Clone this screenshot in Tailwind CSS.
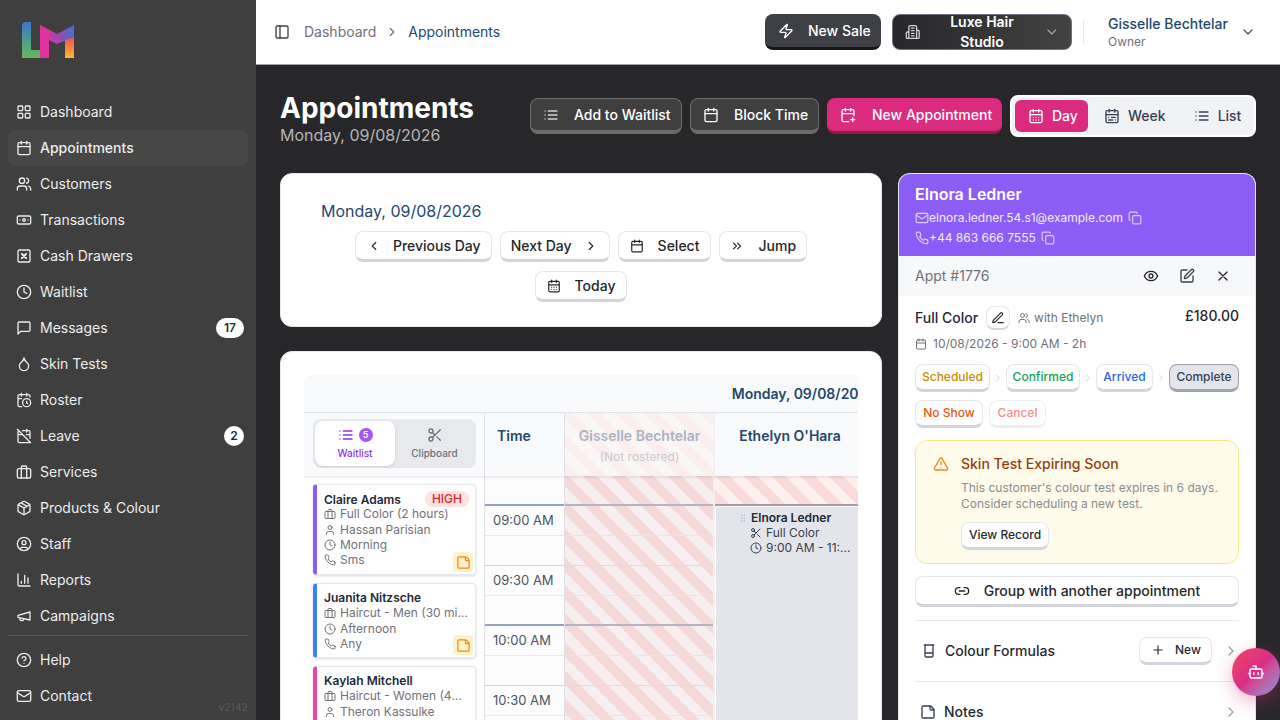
<!DOCTYPE html>
<html lang="en">
<head>
    <meta charset="UTF-8">
    <title>Appointments</title>
    <script src="https://cdn.jsdelivr.net/npm/@tailwindcss/browser@4"></script>
</head>
<body class="[font-family:Inter,sans-serif] bg-[#27272a] h-[720px] overflow-hidden">

<!-- icon sprite -->
<svg class="hidden">
    <symbol id="i-grid" viewBox="0 0 24 24"><rect x="3" y="3" width="7" height="7" rx="1"/><rect x="14" y="3" width="7" height="7" rx="1"/><rect x="14" y="14" width="7" height="7" rx="1"/><rect x="3" y="14" width="7" height="7" rx="1"/></symbol>
    <symbol id="i-cal" viewBox="0 0 24 24"><path d="M8 2v4M16 2v4M3 10h18"/><rect x="3" y="4" width="18" height="18" rx="2"/></symbol>
    <symbol id="i-users" viewBox="0 0 24 24"><path d="M16 21v-2a4 4 0 0 0-4-4H6a4 4 0 0 0-4 4v2"/><circle cx="9" cy="7" r="4"/><path d="M22 21v-2a4 4 0 0 0-3-3.87M16 3.13a4 4 0 0 1 0 7.75"/></symbol>
    <symbol id="i-bank" viewBox="0 0 24 24"><rect x="2" y="6" width="20" height="12" rx="2"/><circle cx="12" cy="12" r="2"/><path d="M6 12h.01M18 12h.01"/></symbol>
    <symbol id="i-drawer" viewBox="0 0 24 24"><rect x="3" y="3" width="18" height="18" rx="2"/><path stroke-width="3" d="m15 9-6 6M9 9l6 6"/></symbol>
    <symbol id="i-clock" viewBox="0 0 24 24"><circle cx="12" cy="12" r="10"/><path d="M12 6v6l4 2"/></symbol>
    <symbol id="i-msg" viewBox="0 0 24 24"><path d="M21 15a2 2 0 0 1-2 2H7l-4 4V5a2 2 0 0 1 2-2h14a2 2 0 0 1 2 2z"/></symbol>
    <symbol id="i-drop" viewBox="0 0 24 24"><path d="M12 22a7 7 0 0 0 7-7c0-2-1-3.9-3-5.5s-3.5-4-4-6.5c-.5 2.5-2 4.9-4 6.5C6 11.1 5 13 5 15a7 7 0 0 0 7 7z"/></symbol>
    <symbol id="i-calclock" viewBox="0 0 24 24"><path d="M21 7.5V6a2 2 0 0 0-2-2H5a2 2 0 0 0-2 2v14a2 2 0 0 0 2 2h3.5M16 2v4M8 2v4M3 10h5M17.5 17.5 16 16.3V14"/><circle cx="16" cy="16" r="6"/></symbol>
    <symbol id="i-caloff" viewBox="0 0 24 24"><path d="M4.2 4.2A2 2 0 0 0 3 6v14a2 2 0 0 0 2 2h14a2 2 0 0 0 1.82-1.18M21 15.5V6a2 2 0 0 0-2-2H9.5M16 2v4M3 10h7M21 10h-5.5M2 2l20 20"/></symbol>
    <symbol id="i-case" viewBox="0 0 24 24"><rect x="2" y="7" width="20" height="14" rx="2"/><path d="M16 21V5a2 2 0 0 0-2-2h-4a2 2 0 0 0-2 2v16"/></symbol>
    <symbol id="i-box" viewBox="0 0 24 24"><path d="m7.5 4.27 9 5.15M21 8a2 2 0 0 0-1-1.73l-7-4a2 2 0 0 0-2 0l-7 4A2 2 0 0 0 3 8v8a2 2 0 0 0 1 1.73l7 4a2 2 0 0 0 2 0l7-4A2 2 0 0 0 21 16ZM3.3 7l8.7 5 8.7-5M12 22V12"/></symbol>
    <symbol id="i-ucircle" viewBox="0 0 24 24"><circle cx="12" cy="12" r="10"/><circle cx="12" cy="10" r="3"/><path d="M7 20.662V19a2 2 0 0 1 2-2h6a2 2 0 0 1 2 2v1.662"/></symbol>
    <symbol id="i-chart" viewBox="0 0 24 24"><path d="M3 3v16a2 2 0 0 0 2 2h16M18 17V9M13 17V5M8 17v-3"/></symbol>
    <symbol id="i-mega" viewBox="0 0 24 24"><path d="m3 11 18-5v12L3 14v-3zM11.6 16.8a3 3 0 1 1-5.8-1.6"/></symbol>
    <symbol id="i-help" viewBox="0 0 24 24"><circle cx="12" cy="12" r="10"/><path d="M9.09 9a3 3 0 0 1 5.83 1c0 2-3 3-3 3M12 17h.01"/></symbol>
    <symbol id="i-mail" viewBox="0 0 24 24"><rect x="2" y="4" width="20" height="16" rx="2"/><path d="m22 7-8.97 5.7a1.94 1.94 0 0 1-2.06 0L2 7"/></symbol>
    <symbol id="i-panel" viewBox="0 0 24 24"><rect x="3" y="3" width="18" height="18" rx="2"/><path d="M9 3v18"/></symbol>
    <symbol id="i-right" viewBox="0 0 24 24"><path d="m9 18 6-6-6-6"/></symbol>
    <symbol id="i-left" viewBox="0 0 24 24"><path d="m15 18-6-6 6-6"/></symbol>
    <symbol id="i-down" viewBox="0 0 24 24"><path d="m6 9 6 6 6-6"/></symbol>
    <symbol id="i-rights" viewBox="0 0 24 24"><path d="m6 17 5-5-5-5M13 17l5-5-5-5"/></symbol>
    <symbol id="i-zap" viewBox="0 0 24 24"><path d="M4 14a1 1 0 0 1-.78-1.63l9.9-10.2a.5.5 0 0 1 .86.46l-1.92 6.02A1 1 0 0 0 13 10h7a1 1 0 0 1 .78 1.63l-9.9 10.2a.5.5 0 0 1-.86-.46l1.92-6.02A1 1 0 0 0 11 14z"/></symbol>
    <symbol id="i-build" viewBox="0 0 24 24"><path d="M6 22V4a2 2 0 0 1 2-2h8a2 2 0 0 1 2 2v18ZM6 12H4a2 2 0 0 0-2 2v6a2 2 0 0 0 2 2h2M18 9h2a2 2 0 0 1 2 2v9a2 2 0 0 1-2 2h-2M10 6h4M10 10h4M10 14h4M10 18h4"/></symbol>
    <symbol id="i-list" viewBox="0 0 24 24"><path d="M3 12h.01M3 18h.01M3 6h.01M8 12h13M8 18h13M8 6h13"/></symbol>
    <symbol id="i-calplus" viewBox="0 0 24 24"><path d="M8 2v4M16 2v4M21 13V6a2 2 0 0 0-2-2H5a2 2 0 0 0-2 2v14a2 2 0 0 0 2 2h8M3 10h18M16 19h6M19 16v6"/></symbol>
    <symbol id="i-caldays" viewBox="0 0 24 24"><path d="M8 2v4M16 2v4M3 10h18M8 14h.01M12 14h.01M16 14h.01M8 18h.01M12 18h.01M16 18h.01"/><rect x="3" y="4" width="18" height="18" rx="2"/></symbol>
    <symbol id="i-calrange" viewBox="0 0 24 24"><rect x="3" y="4" width="18" height="18" rx="2"/><path d="M16 2v4M3 10h18M8 2v4M17 14h-6M13 18H7M7 14h.01M17 18h.01"/></symbol>
    <symbol id="i-scissors" viewBox="0 0 24 24"><circle cx="6" cy="6" r="3"/><path d="M8.12 8.12 12 12M20 4 8.12 15.88"/><circle cx="6" cy="18" r="3"/><path d="M14.8 14.8 20 20"/></symbol>
    <symbol id="i-user" viewBox="0 0 24 24"><path d="M19 21v-2a4 4 0 0 0-4-4H9a4 4 0 0 0-4 4v2"/><circle cx="12" cy="7" r="4"/></symbol>
    <symbol id="i-phone" viewBox="0 0 24 24"><path d="M22 16.92v3a2 2 0 0 1-2.18 2 19.79 19.79 0 0 1-8.63-3.07 19.5 19.5 0 0 1-6-6 19.79 19.79 0 0 1-3.07-8.67A2 2 0 0 1 4.11 2h3a2 2 0 0 1 2 1.72 12.84 12.84 0 0 0 .7 2.81 2 2 0 0 1-.45 2.11L8.09 9.91a16 16 0 0 0 6 6l1.27-1.27a2 2 0 0 1 2.11-.45 12.84 12.84 0 0 0 2.81.7A2 2 0 0 1 22 16.92z"/></symbol>
    <symbol id="i-note" viewBox="0 0 24 24"><path d="M16 3H5a2 2 0 0 0-2 2v14a2 2 0 0 0 2 2h14a2 2 0 0 0 2-2V8ZM15 3v4a2 2 0 0 0 2 2h4"/></symbol>
    <symbol id="i-grip" viewBox="0 0 24 24"><path stroke-width="3" d="M9 5h.01M9 12h.01M9 19h.01M15 5h.01M15 12h.01M15 19h.01"/></symbol>
    <symbol id="i-copy" viewBox="0 0 24 24"><rect x="8" y="8" width="14" height="14" rx="2"/><path d="M4 16c-1.1 0-2-.9-2-2V4c0-1.1.9-2 2-2h10c1.1 0 2 .9 2 2"/></symbol>
    <symbol id="i-eye" viewBox="0 0 24 24"><path d="M2 12s3-7 10-7 10 7 10 7-3 7-10 7-10-7-10-7Z"/><circle cx="12" cy="12" r="3"/></symbol>
    <symbol id="i-edit" viewBox="0 0 24 24"><path d="M12 3H5a2 2 0 0 0-2 2v14a2 2 0 0 0 2 2h14a2 2 0 0 0 2-2v-7M18.375 2.625a1 1 0 0 1 3 3l-9.013 9.014a2 2 0 0 1-.853.505l-2.873.84a.5.5 0 0 1-.62-.62l.84-2.873a2 2 0 0 1 .506-.852z"/></symbol>
    <symbol id="i-x" viewBox="0 0 24 24"><path d="M18 6 6 18M6 6l12 12"/></symbol>
    <symbol id="i-pen" viewBox="0 0 24 24"><path d="M12 20h9M16.376 3.622a1 1 0 0 1 3.002 3.002L7.368 18.635a2 2 0 0 1-.855.506l-2.872.838a.5.5 0 0 1-.62-.62l.838-2.872a2 2 0 0 1 .506-.854z"/></symbol>
    <symbol id="i-warn" viewBox="0 0 24 24"><path d="m21.73 18-8-14a2 2 0 0 0-3.48 0l-8 14A2 2 0 0 0 4 21h16a2 2 0 0 0 1.73-3ZM12 9v4M12 17h.01"/></symbol>
    <symbol id="i-link" viewBox="0 0 24 24"><path d="M9 17H7A5 5 0 0 1 7 7h2M15 7h2a5 5 0 1 1 0 10h-2M8 12h8"/></symbol>
    <symbol id="i-glass" viewBox="0 0 24 24"><path d="M5 3h14M6 3v16a2 2 0 0 0 2 2h8a2 2 0 0 0 2-2V3M6 15h12"/></symbol>
    <symbol id="i-plus" viewBox="0 0 24 24"><path d="M5 12h14M12 5v14"/></symbol>
    <symbol id="i-bot" viewBox="0 0 24 24"><path d="M12 8V4H8"/><rect x="4" y="8" width="16" height="12" rx="2"/><path d="M2 14h2M20 14h2M15 13v2M9 13v2"/></symbol>
</svg>

<div class="flex h-[720px]">

    <!-- sidebar -->
    <aside class="w-[256px] shrink-0 bg-[#3f3f3f] relative text-[#ececec] text-sm">
        <div class="h-[94px] pl-[22px] pt-[22px]">
            <svg width="54" height="37" viewBox="22 22 54 37">
                <defs>
                    <linearGradient id="lg1" x1="0" y1="0" x2="0" y2="1"><stop offset="0" stop-color="#3b78cc"/><stop offset="1" stop-color="#64bb55"/></linearGradient>
                    <linearGradient id="lg2" x1="0" y1="0" x2="1" y2="0"><stop offset="0" stop-color="#e0339c"/><stop offset=".55" stop-color="#a446ad"/><stop offset="1" stop-color="#3b74cf"/></linearGradient>
                    <linearGradient id="lg3" x1="0" y1="0" x2="0" y2="1"><stop offset="0" stop-color="#ee4c62"/><stop offset="1" stop-color="#fdb92c"/></linearGradient>
                </defs>
                <path fill="url(#lg1)" d="M22 58V26a4 4 0 0 1 4-4h5v28h9v8z"/>
                <path fill="url(#lg2)" d="M40 25l17 9 17-9v12l-17 7-8-4v18h-9z"/>
                <path fill="#e0339c" d="M40 25l9 5v28h-9z"/>
                <path fill="url(#lg3)" d="M65 40l9-3v21h-9z"/>
            </svg>
        </div>
        <nav class="px-2 flex flex-col">
            <a class="h-9 flex items-center gap-2 px-2"><svg class="w-4 h-4 fill-none stroke-current stroke-2 [stroke-linecap:round] [stroke-linejoin:round]"><use href="#i-grid"/></svg>Dashboard</a>
            <a class="h-9 flex items-center gap-2 px-2 bg-[#474747] rounded-lg font-medium"><svg class="w-4 h-4 fill-none stroke-current stroke-2 [stroke-linecap:round] [stroke-linejoin:round]"><use href="#i-cal"/></svg>Appointments</a>
            <a class="h-9 flex items-center gap-2 px-2"><svg class="w-4 h-4 fill-none stroke-current stroke-2 [stroke-linecap:round] [stroke-linejoin:round]"><use href="#i-users"/></svg>Customers</a>
            <a class="h-9 flex items-center gap-2 px-2"><svg class="w-4 h-4 fill-none stroke-current stroke-2 [stroke-linecap:round] [stroke-linejoin:round]"><use href="#i-bank"/></svg>Transactions</a>
            <a class="h-9 flex items-center gap-2 px-2"><svg class="w-4 h-4 fill-none stroke-current stroke-2 [stroke-linecap:round] [stroke-linejoin:round]"><use href="#i-drawer"/></svg>Cash Drawers</a>
            <a class="h-9 flex items-center gap-2 px-2"><svg class="w-4 h-4 fill-none stroke-current stroke-2 [stroke-linecap:round] [stroke-linejoin:round]"><use href="#i-clock"/></svg>Waitlist</a>
            <a class="h-9 flex items-center gap-2 px-2"><svg class="w-4 h-4 fill-none stroke-current stroke-2 [stroke-linecap:round] [stroke-linejoin:round]"><use href="#i-msg"/></svg>Messages<span class="ml-auto mr-[-4px] h-5 w-7 rounded-full bg-white text-[#1f2937] text-xs font-semibold flex items-center justify-center">17</span></a>
            <a class="h-9 flex items-center gap-2 px-2"><svg class="w-4 h-4 fill-none stroke-current stroke-2 [stroke-linecap:round] [stroke-linejoin:round]"><use href="#i-drop"/></svg>Skin Tests</a>
            <a class="h-9 flex items-center gap-2 px-2"><svg class="w-4 h-4 fill-none stroke-current stroke-2 [stroke-linecap:round] [stroke-linejoin:round]"><use href="#i-calclock"/></svg>Roster</a>
            <a class="h-9 flex items-center gap-2 px-2"><svg class="w-4 h-4 fill-none stroke-current stroke-2 [stroke-linecap:round] [stroke-linejoin:round]"><use href="#i-caloff"/></svg>Leave<span class="ml-auto mr-[-4px] h-5 w-5 rounded-full bg-white text-[#1f2937] text-xs font-semibold flex items-center justify-center">2</span></a>
            <a class="h-9 flex items-center gap-2 px-2"><svg class="w-4 h-4 fill-none stroke-current stroke-2 [stroke-linecap:round] [stroke-linejoin:round]"><use href="#i-case"/></svg>Services</a>
            <a class="h-9 flex items-center gap-2 px-2"><svg class="w-4 h-4 fill-none stroke-current stroke-2 [stroke-linecap:round] [stroke-linejoin:round]"><use href="#i-box"/></svg>Products &amp; Colour</a>
            <a class="h-9 flex items-center gap-2 px-2"><svg class="w-4 h-4 fill-none stroke-current stroke-2 [stroke-linecap:round] [stroke-linejoin:round]"><use href="#i-ucircle"/></svg>Staff</a>
            <a class="h-9 flex items-center gap-2 px-2"><svg class="w-4 h-4 fill-none stroke-current stroke-2 [stroke-linecap:round] [stroke-linejoin:round]"><use href="#i-chart"/></svg>Reports</a>
            <a class="h-9 flex items-center gap-2 px-2"><svg class="w-4 h-4 fill-none stroke-current stroke-2 [stroke-linecap:round] [stroke-linejoin:round]"><use href="#i-mega"/></svg>Campaigns</a>
            <div class="border-t border-[#5a5a5a] mt-[1px] mb-[6px]"></div>
            <a class="h-9 flex items-center gap-2 px-2"><svg class="w-4 h-4 fill-none stroke-current stroke-2 [stroke-linecap:round] [stroke-linejoin:round]"><use href="#i-help"/></svg>Help</a>
            <a class="h-9 flex items-center gap-2 px-2"><svg class="w-4 h-4 fill-none stroke-current stroke-2 [stroke-linecap:round] [stroke-linejoin:round]"><use href="#i-mail"/></svg>Contact</a>
        </nav>
        <span class="absolute right-2 bottom-[6px] text-[10px] tracking-wide text-[#5c5c5c]">v2142</span>
    </aside>

    <div class="flex-1 min-w-0 flex flex-col">

        <!-- top bar -->
        <header class="h-[65px] shrink-0 bg-white border-b border-[#a3a3a3] flex items-center pl-[18px] pr-6 text-sm">
            <svg class="w-4 h-4 fill-none stroke-[#3f3f46] stroke-2 [stroke-linecap:round] [stroke-linejoin:round]"><use href="#i-panel"/></svg>
            <span class="ml-[14px] text-[#71717a]">Dashboard</span>
            <svg class="w-[14px] h-[14px] mx-[9px] fill-none stroke-[#71717a] stroke-2 [stroke-linecap:round] [stroke-linejoin:round]"><use href="#i-right"/></svg>
            <span class="text-[#24486e]">Appointments</span>
            <button class="ml-auto h-9 w-[116px] rounded-lg bg-[#3f3f46] border-b-[3px] border-[#18181b] text-white font-medium flex items-center pl-[13px] gap-[14px]"><svg class="w-4 h-4 fill-none stroke-current stroke-2 [stroke-linecap:round] [stroke-linejoin:round]"><use href="#i-zap"/></svg>New Sale</button>
            <button class="ml-[11px] h-9 w-[180px] rounded-lg bg-gradient-to-r from-[#27272a] to-[#434343] border border-[#6b7280] text-white font-semibold flex items-center pl-[12px] gap-2"><svg class="w-4 h-4 fill-none stroke-[#d4d4d8] stroke-2 [stroke-linecap:round] [stroke-linejoin:round]"><use href="#i-build"/></svg>Luxe Hair Studio<svg class="w-4 h-4 ml-auto mr-[12px] fill-none stroke-[#a1a1aa] stroke-2 [stroke-linecap:round] [stroke-linejoin:round]"><use href="#i-down"/></svg></button>
            <div class="w-px h-6 bg-[#e5e7eb] ml-[11px]"></div>
            <div class="ml-[24px] flex flex-col">
                <span class="text-[#24486e] font-medium leading-5">Gisselle Bechtelar</span>
                <span class="text-xs text-[#71717a] leading-4">Owner</span>
            </div>
            <svg class="w-4 h-4 ml-[12px] fill-none stroke-[#52525b] stroke-2 [stroke-linecap:round] [stroke-linejoin:round]"><use href="#i-down"/></svg>
        </header>

        <main class="flex-1 min-h-0 overflow-hidden px-6 relative">

            <!-- title row -->
            <div class="h-[108px] flex items-start">
                <div class="pt-[25px] text-white">
                    <h1 class="text-[28px] leading-9 font-bold">Appointments</h1>
                    <p class="text-base leading-5 text-[#b4b4b8] mt-[-1px]">Monday, 09/08/2026</p>
                </div>
                <div class="ml-auto flex items-start gap-2 pt-[33px] text-sm">
                    <button class="h-9 w-[152px] rounded-lg bg-[#3f3f3f] border border-[#6b6b6b] border-b-[4px] text-white font-medium flex items-center pl-3 gap-[15px]"><svg class="w-4 h-4 fill-none stroke-[#d4d4d8] stroke-2 [stroke-linecap:round] [stroke-linejoin:round]"><use href="#i-list"/></svg>Add to Waitlist</button>
                    <button class="h-9 w-[129px] rounded-lg bg-[#3f3f3f] border border-[#6b6b6b] border-b-[4px] text-white font-medium flex items-center pl-3 gap-[15px]"><svg class="w-4 h-4 fill-none stroke-current stroke-2 [stroke-linecap:round] [stroke-linejoin:round]"><use href="#i-cal"/></svg>Block Time</button>
                    <button class="h-9 w-[175px] rounded-lg bg-[#db2b7f] border-b-[3px] border-[#9d174d] text-white font-medium flex items-center pl-[13px] gap-4"><svg class="w-4 h-4 fill-none stroke-current stroke-2 [stroke-linecap:round] [stroke-linejoin:round]"><use href="#i-calplus"/></svg>New Appointment</button>
                    <div class="mt-[-3px] h-[42px] w-[246px] rounded-lg bg-[#f1f2f5] border-2 border-white flex items-center p-[3px] text-[#374151] font-medium">
                        <span class="h-8 w-[73px] rounded-md bg-[#db2b7f] text-white flex items-center pl-[13px] gap-2"><svg class="w-4 h-4 fill-none stroke-current stroke-2 [stroke-linecap:round] [stroke-linejoin:round]"><use href="#i-caldays"/></svg>Day</span>
                        <span class="ml-4 flex items-center gap-2"><svg class="w-4 h-4 fill-none stroke-current stroke-2 [stroke-linecap:round] [stroke-linejoin:round]"><use href="#i-calrange"/></svg>Week</span>
                        <span class="ml-7 flex items-center gap-2"><svg class="w-4 h-4 fill-none stroke-current stroke-2 [stroke-linecap:round] [stroke-linejoin:round]"><use href="#i-list"/></svg>List</span>
                    </div>
                </div>
            </div>

            <div class="flex items-start gap-4">

                <!-- left column -->
                <div class="w-[602px] shrink-0 flex flex-col gap-6">
                    <section class="h-[154px] bg-white rounded-xl border border-[#e5e7eb] px-[40px] pt-[27px] text-sm text-[#27272a]">
                        <p class="text-base leading-5 text-[#24486e]">Monday, 09/08/2026</p>
                        <div class="mt-[10px] flex flex-wrap justify-center gap-x-2 gap-y-[9px] font-medium">
                            <button class="h-[31px] rounded-lg bg-white border border-[#e5e7eb] border-b-[3px] border-b-[#d4d4dc] flex items-center pl-[11px] pr-[10px] gap-3"><svg class="w-[14px] h-[14px] fill-none stroke-current stroke-2 [stroke-linecap:round] [stroke-linejoin:round]"><use href="#i-left"/></svg>Previous Day</button>
                            <button class="h-[31px] rounded-lg bg-white border border-[#e5e7eb] border-b-[3px] border-b-[#d4d4dc] flex items-center pl-[10px] pr-[11px] gap-3">Next Day<svg class="w-[14px] h-[14px] fill-none stroke-current stroke-2 [stroke-linecap:round] [stroke-linejoin:round]"><use href="#i-right"/></svg></button>
                            <button class="h-[31px] rounded-lg bg-white border border-[#e5e7eb] border-b-[3px] border-b-[#d4d4dc] flex items-center px-[11px] gap-[14px]"><svg class="w-[14px] h-[14px] fill-none stroke-current stroke-2 [stroke-linecap:round] [stroke-linejoin:round]"><use href="#i-cal"/></svg>Select</button>
                            <button class="h-[31px] rounded-lg bg-white border border-[#e5e7eb] border-b-[3px] border-b-[#d4d4dc] flex items-center px-[10px] gap-[14px]"><svg class="w-[14px] h-[14px] fill-none stroke-current stroke-2 [stroke-linecap:round] [stroke-linejoin:round]"><use href="#i-rights"/></svg>Jump</button>
                            <button class="h-[31px] rounded-lg bg-white border border-[#e5e7eb] border-b-[3px] border-b-[#d4d4dc] flex items-center px-[11px] gap-[14px]"><svg class="w-[14px] h-[14px] fill-none stroke-current stroke-2 [stroke-linecap:round] [stroke-linejoin:round]"><use href="#i-caldays"/></svg>Today</button>
                        </div>
                    </section>

                    <!-- calendar -->
                    <section class="h-[400px] bg-white rounded-xl border border-[#e5e7eb] p-[23px] pb-0">
                        <div class="w-[554px] h-[400px] overflow-hidden">
                            <div class="w-[1000px]">
                                <div class="h-[38px] bg-[#f9fafb] border-b border-[#e5e7eb] rounded-t-lg flex items-center justify-center text-sm font-semibold text-[#24486e]">Monday, 09/08/2026</div>
                                <div class="flex h-[63px] bg-[#f9fafb] shadow-[0_1px_3px_rgba(0,0,0,0.12)] relative z-10">
                                    <div class="w-[181px] border-r border-[#e0e2e7] pl-[9px] pt-[6px]">
                                        <div class="w-[163px] h-[49px] rounded-lg bg-[#e8e9ed] p-[2px] flex">
                                            <div class="w-[80px] h-[45px] rounded-lg bg-white shadow-sm flex flex-col items-center pt-[6px] text-[#9333ea]">
                                                <div class="flex items-center gap-[5px] h-4"><svg class="w-4 h-4 fill-none stroke-[#9333ea] stroke-2 [stroke-linecap:round] [stroke-linejoin:round]"><use href="#i-list"/></svg><span class="w-[14px] h-[14px] rounded-full bg-[#a855f7] text-white text-[9px] font-semibold flex items-center justify-center">5</span></div>
                                                <span class="text-[10px] font-medium leading-4 mt-[2px]">Waitlist</span>
                                            </div>
                                            <div class="flex-1 flex flex-col items-center pt-[6px] text-[#6b7280]">
                                                <svg class="w-4 h-4 fill-none stroke-current stroke-2 [stroke-linecap:round] [stroke-linejoin:round]"><use href="#i-scissors"/></svg>
                                                <span class="text-[10px] font-medium leading-4 mt-[2px]">Clipboard</span>
                                            </div>
                                        </div>
                                    </div>
                                    <div class="w-[80px] border-r border-[#e0e2e7] pl-3 pt-[13px] text-sm font-semibold text-[#24486e]">Time</div>
                                    <div class="w-[150px] border-r border-[#eeeff2] pt-[13px] text-center bg-[repeating-linear-gradient(45deg,#fbeeee,#fbeeee_10px,#fbf6f6_10px,#fbf6f6_20px)]">
                                        <div class="text-sm font-semibold text-[#a9b4c2]">Gisselle Bechtelar</div>
                                        <div class="text-xs text-[#c9c9cf] mt-[3px]">(Not rostered)</div>
                                    </div>
                                    <div class="w-[150px] pt-[13px] text-center text-sm font-semibold text-[#24486e]">Ethelyn O'Hara</div>
                                </div>
                                <div class="flex">
                                    <!-- waitlist -->
                                    <div class="w-[181px] border-r border-[#e0e2e7] pl-[9px] pr-2 pt-2 flex flex-col gap-2 text-xs text-[#71717a]">
                                        <div class="h-[91px] rounded bg-white border border-[#e5e7eb] border-l-[4px] border-l-[#8b5cf6] shadow-[0_1px_3px_rgba(0,0,0,0.15)] pl-[7px] pr-[6px] pt-[6px] leading-[15px] relative">
                                            <div class="flex items-center justify-between text-[#1f2937] font-semibold"><span>Claire Adams</span><span class="rounded-full bg-[#fee2e2] text-[#dc2626] font-medium px-[7px] leading-4">HIGH</span></div>
                                            <div class="flex items-center gap-1 mt-[-1px]"><svg class="w-3 h-3 fill-none stroke-current stroke-2 [stroke-linecap:round] [stroke-linejoin:round]"><use href="#i-case"/></svg>Full Color (2 hours)</div>
                                            <div class="flex items-center gap-1 mt-[1px]"><svg class="w-3 h-3 fill-none stroke-current stroke-2 [stroke-linecap:round] [stroke-linejoin:round]"><use href="#i-user"/></svg>Hassan Parisian</div>
                                            <div class="flex items-center gap-1"><svg class="w-3 h-3 fill-none stroke-current stroke-2 [stroke-linecap:round] [stroke-linejoin:round]"><use href="#i-clock"/></svg>Morning</div>
                                            <div class="flex items-center gap-1"><svg class="w-3 h-3 fill-none stroke-current stroke-2 [stroke-linecap:round] [stroke-linejoin:round]"><use href="#i-phone"/></svg>Sms</div>
                                            <span class="absolute right-[2px] bottom-[2px] w-5 h-5 rounded bg-[#fef3c7] flex items-center justify-center"><svg class="w-[15px] h-[15px] fill-none stroke-[#e58a24] stroke-2 [stroke-linecap:round] [stroke-linejoin:round]"><use href="#i-note"/></svg></span>
                                        </div>
                                        <div class="h-[75px] rounded bg-white border border-[#e5e7eb] border-l-[4px] border-l-[#3b82f6] shadow-[0_1px_3px_rgba(0,0,0,0.15)] pl-[7px] pr-[6px] pt-[6px] leading-[15px] relative">
                                            <div class="text-[#1f2937] font-semibold">Juanita Nitzsche</div>
                                            <div class="flex items-center gap-1"><svg class="w-3 h-3 shrink-0 fill-none stroke-current stroke-2 [stroke-linecap:round] [stroke-linejoin:round]"><use href="#i-case"/></svg><span class="truncate">Haircut - Men (30 minutes)</span></div>
                                            <div class="flex items-center gap-1 mt-[1px]"><svg class="w-3 h-3 fill-none stroke-current stroke-2 [stroke-linecap:round] [stroke-linejoin:round]"><use href="#i-clock"/></svg>Afternoon</div>
                                            <div class="flex items-center gap-1"><svg class="w-3 h-3 fill-none stroke-current stroke-2 [stroke-linecap:round] [stroke-linejoin:round]"><use href="#i-phone"/></svg>Any</div>
                                            <span class="absolute right-[2px] bottom-[2px] w-5 h-5 rounded bg-[#fef3c7] flex items-center justify-center"><svg class="w-[15px] h-[15px] fill-none stroke-[#e58a24] stroke-2 [stroke-linecap:round] [stroke-linejoin:round]"><use href="#i-note"/></svg></span>
                                        </div>
                                        <div class="h-[75px] rounded bg-white border border-[#e5e7eb] border-l-[4px] border-l-[#ec4899] shadow-[0_1px_3px_rgba(0,0,0,0.15)] pl-[7px] pr-[6px] pt-[6px] leading-[15px]">
                                            <div class="text-[#1f2937] font-semibold">Kaylah Mitchell</div>
                                            <div class="flex items-center gap-1"><svg class="w-3 h-3 shrink-0 fill-none stroke-current stroke-2 [stroke-linecap:round] [stroke-linejoin:round]"><use href="#i-case"/></svg><span class="truncate">Haircut - Women (45 minutes)</span></div>
                                            <div class="flex items-center gap-1 mt-[1px]"><svg class="w-3 h-3 fill-none stroke-current stroke-2 [stroke-linecap:round] [stroke-linejoin:round]"><use href="#i-user"/></svg>Theron Kassulke</div>
                                        </div>
                                    </div>
                                    <!-- time column -->
                                    <div class="w-[80px] border-r border-[#e0e2e7] bg-[#fcfcfd] text-xs text-[#4b5563]">
                                        <div class="h-[30px] border-b-2 border-[#94a3b8]"></div>
                                        <div class="h-[30px] border-b border-[#e5e7eb] pl-2 pt-[6px] text-[13px]">09:00 AM</div>
                                        <div class="h-[30px] border-b border-[#cbd5e1]"></div>
                                        <div class="h-[30px] border-b border-[#e5e7eb] pl-2 pt-[6px] text-[13px]">09:30 AM</div>
                                        <div class="h-[30px] border-b-2 border-[#94a3b8]"></div>
                                        <div class="h-[30px] border-b border-[#e5e7eb] pl-2 pt-[6px] text-[13px]">10:00 AM</div>
                                        <div class="h-[30px] border-b border-[#cbd5e1]"></div>
                                        <div class="h-[30px] border-b border-[#e5e7eb] pl-2 pt-[6px] text-[13px]">10:30 AM</div>
                                    </div>
                                    <!-- Gisselle, not rostered -->
                                    <div class="w-[150px] border-r-2 border-[#f1f1f3] bg-[repeating-linear-gradient(45deg,#f5d9d9,#f5d9d9_10px,#f7eef0_10px,#f7eef0_20px)]">
                                        <div class="h-[30px] border-b-2 border-[#b4b4c2]"></div>
                                        <div class="h-[30px] border-b border-[#e8e4e8]"></div>
                                        <div class="h-[30px] border-b border-[#e0dadf]"></div>
                                        <div class="h-[30px] border-b border-[#e8e4e8]"></div>
                                        <div class="h-[30px] border-b-2 border-[#b4b4c2]"></div>
                                        <div class="h-[30px] border-b border-[#e8e4e8]"></div>
                                        <div class="h-[30px] border-b border-[#e0dadf]"></div>
                                        <div class="h-[30px] border-b border-[#e8e4e8]"></div>
                                    </div>
                                    <!-- Ethelyn -->
                                    <div class="w-[150px] relative bg-[#fcfcfd]">
                                        <div class="h-[30px] border-b-2 border-[#a89ca8] bg-[repeating-linear-gradient(45deg,#fbdada,#fbdada_10px,#fff0f0_10px,#fff0f0_20px)]"></div>
                                        <div class="absolute left-[1px] top-[31px] w-[149px] h-[240px] bg-[#e4e5ea] pl-[22px] pt-[3px] text-xs leading-[15px] text-[#374151]">
                                            <div class="flex items-center gap-[3px] font-semibold text-[#1f2937]"><svg class="w-[10px] h-3 text-[#9ca3af] fill-none stroke-current stroke-2 [stroke-linecap:round]"><use href="#i-grip"/></svg>Elnora Ledner</div>
                                            <div class="flex items-center gap-1 pl-[12px]"><svg class="w-3 h-3 fill-none stroke-current stroke-2 [stroke-linecap:round] [stroke-linejoin:round]"><use href="#i-scissors"/></svg>Full Color</div>
                                            <div class="flex items-center gap-1 pl-[12px]"><svg class="w-3 h-3 fill-none stroke-current stroke-2 [stroke-linecap:round] [stroke-linejoin:round]"><use href="#i-clock"/></svg>9:00 AM - 11:...</div>
                                        </div>
                                    </div>
                                </div>
                            </div>
                        </div>
                    </section>
                </div>

                <!-- details panel -->
                <section class="w-[358px] shrink-0 h-[560px] bg-white rounded-t-xl border border-b-0 border-[#e5e7eb] overflow-hidden text-sm">
                    <div class="h-[82px] bg-[#8b5cf6] text-white px-4 pt-[9px]">
                        <div class="text-base font-semibold leading-[22px]">Elnora Ledner</div>
                        <div class="flex items-center text-xs leading-5 mt-[3px] text-[#f3eeff]"><svg class="w-[14px] h-[14px] fill-none stroke-[#ddd0fd] stroke-2 [stroke-linecap:round] [stroke-linejoin:round]"><use href="#i-mail"/></svg>elnora.ledner.54.s1@example.com<svg class="w-[14px] h-[14px] ml-[5px] fill-none stroke-[#ddd0fd] stroke-2 [stroke-linecap:round] [stroke-linejoin:round]"><use href="#i-copy"/></svg></div>
                        <div class="flex items-center text-xs leading-5 text-[#f3eeff]"><svg class="w-[14px] h-[14px] fill-none stroke-[#ddd0fd] stroke-2 [stroke-linecap:round] [stroke-linejoin:round]"><use href="#i-phone"/></svg>+44 863 666 7555<svg class="w-[14px] h-[14px] ml-[5px] fill-none stroke-[#ddd0fd] stroke-2 [stroke-linecap:round] [stroke-linejoin:round]"><use href="#i-copy"/></svg></div>
                    </div>
                    <div class="h-10 bg-[#f7f8f9] flex items-center px-4 text-[#71717a]">
                        Appt #1776
                        <svg class="w-4 h-4 ml-auto mr-[20px] fill-none stroke-[#27272a] stroke-2 [stroke-linecap:round] [stroke-linejoin:round]"><use href="#i-eye"/></svg>
                        <svg class="w-4 h-4 mr-[20px] fill-none stroke-[#3f3f46] stroke-2 [stroke-linecap:round] [stroke-linejoin:round]"><use href="#i-edit"/></svg>
                        <svg class="w-4 h-4 mr-2 fill-none stroke-[#27272a] stroke-2 [stroke-linecap:round] [stroke-linejoin:round]"><use href="#i-x"/></svg>
                    </div>
                    <div class="px-4">
                        <div class="flex items-center h-[24px] mt-[10px]">
                            <span class="font-medium text-[#1f2937]">Full Color</span>
                            <span class="ml-2 w-6 h-6 rounded-lg bg-white border border-[#e5e7eb] border-b-2 border-b-[#d4d4dc] flex items-center justify-center"><svg class="w-[14px] h-[14px] fill-none stroke-[#27272a] stroke-2 [stroke-linecap:round] [stroke-linejoin:round]"><use href="#i-pen"/></svg></span>
                            <svg class="w-3 h-3 ml-2 fill-none stroke-[#71717a] stroke-2 [stroke-linecap:round] [stroke-linejoin:round]"><use href="#i-users"/></svg>
                            <span class="ml-1 text-xs text-[#71717a]">with Ethelyn</span>
                            <span class="ml-auto font-medium text-[#27272a] mt-[-4px]">£180.00</span>
                        </div>
                        <div class="flex items-center h-4 mt-[6px] gap-[6px] text-xs text-[#71717a]"><svg class="w-3 h-3 fill-none stroke-current stroke-2 [stroke-linecap:round] [stroke-linejoin:round]"><use href="#i-cal"/></svg>10/08/2026 - 9:00 AM - 2h</div>
                        <div class="flex items-center mt-3 text-xs font-medium">
                            <span class="h-7 w-[75px] rounded-lg bg-white border border-[#e5e7eb] border-b-[3px] border-b-[#d4d4dc] flex items-center justify-center text-[#ca8a04]">Scheduled</span>
                            <svg class="w-3 h-3 mx-[2px] fill-none stroke-[#d4d4d8] stroke-2 [stroke-linecap:round] [stroke-linejoin:round]"><use href="#i-right"/></svg>
                            <span class="h-7 w-[74px] rounded-lg bg-white border border-[#e5e7eb] border-b-[3px] border-b-[#d4d4dc] flex items-center justify-center text-[#16a34a]">Confirmed</span>
                            <svg class="w-3 h-3 mx-[2px] fill-none stroke-[#d4d4d8] stroke-2 [stroke-linecap:round] [stroke-linejoin:round]"><use href="#i-right"/></svg>
                            <span class="h-7 w-[57px] rounded-lg bg-white border border-[#e5e7eb] border-b-[3px] border-b-[#d4d4dc] flex items-center justify-center text-[#2563eb]">Arrived</span>
                            <svg class="w-3 h-3 mx-[2px] fill-none stroke-[#d4d4d8] stroke-2 [stroke-linecap:round] [stroke-linejoin:round]"><use href="#i-right"/></svg>
                            <span class="h-7 w-[70px] rounded-lg bg-[#e4e5ea] border border-[#9ca3af] border-b-[3px] flex items-center justify-center text-[#374151]">Complete</span>
                        </div>
                        <div class="flex items-center gap-[6px] mt-2 text-xs font-medium">
                            <span class="h-7 w-[68px] rounded-lg bg-white border border-[#e5e7eb] border-b-[3px] border-b-[#d4d4dc] flex items-center justify-center text-[#ea580c]">No Show</span>
                            <span class="h-7 w-[57px] rounded-lg bg-white border border-[#eeeff2] border-b-[3px] flex items-center justify-center text-[#f98a8a]">Cancel</span>
                        </div>
                        <div class="mt-3 h-[124px] rounded-xl bg-[#fffbeb] border border-[#fde68a] pl-[17px] pt-[13px] flex items-start gap-3">
                            <svg class="w-4 h-4 mt-[2px] shrink-0 fill-none stroke-[#ea8a1c] stroke-2 [stroke-linecap:round] [stroke-linejoin:round]"><use href="#i-warn"/></svg>
                            <div>
                                <div class="font-medium text-[#92400e] leading-5">Skin Test Expiring Soon</div>
                                <p class="text-xs leading-4 text-[#8c8c8c] mt-[6px]">This customer's colour test expires in 6 days.<br>Consider scheduling a new test.</p>
                                <button class="mt-[10px] h-7 w-[88px] rounded-lg bg-white border border-[#e5e7eb] border-b-[3px] border-b-[#d4d4dc] text-xs font-medium text-[#27272a]">View Record</button>
                            </div>
                        </div>
                        <button class="mt-3 h-[31px] w-full rounded-lg bg-white border border-[#e5e7eb] border-b-[3px] border-b-[#d4d4dc] flex items-center justify-center gap-[14px] font-medium text-[#27272a]"><svg class="w-4 h-4 fill-none stroke-current stroke-2 [stroke-linecap:round] [stroke-linejoin:round]"><use href="#i-link"/></svg>Group with another appointment</button>
                        <div class="mt-[13px] border-t border-[#e5e7eb] h-[61px] flex items-center font-medium text-[#1f2937] pl-[6px]">
                            <svg class="w-4 h-4 mr-2 fill-none stroke-[#374151] stroke-2 [stroke-linecap:round] [stroke-linejoin:round]"><use href="#i-glass"/></svg>
                            Colour Formulas
                            <span class="ml-auto h-7 w-[73px] rounded-lg bg-white border border-[#e5e7eb] border-b-[3px] border-b-[#d4d4dc] text-xs flex items-center pl-[11px] gap-[10px]"><svg class="w-[14px] h-[14px] fill-none stroke-current stroke-2 [stroke-linecap:round] [stroke-linejoin:round]"><use href="#i-plus"/></svg>New</span>
                            <svg class="w-4 h-4 ml-[11px] fill-none stroke-[#9ca3af] stroke-2 [stroke-linecap:round] [stroke-linejoin:round]"><use href="#i-right"/></svg>
                        </div>
                        <div class="border-t border-[#e5e7eb] h-[60px] flex items-center font-medium text-[#1f2937] pl-[5px]">
                            <svg class="w-4 h-4 mr-2 fill-none stroke-[#374151] stroke-2 [stroke-linecap:round] [stroke-linejoin:round]"><use href="#i-note"/></svg>
                            Notes
                            <svg class="w-4 h-4 ml-auto fill-none stroke-[#9ca3af] stroke-2 [stroke-linecap:round] [stroke-linejoin:round]"><use href="#i-right"/></svg>
                        </div>
                    </div>
                </section>
            </div>

            <!-- assistant button -->
            <button class="absolute right-0 top-[583px] w-12 h-12 rounded-full bg-gradient-to-br from-[#f0455e] via-[#db2b87] to-[#6f8fe0] shadow-[0_6px_18px_rgba(219,39,119,0.35)] flex items-center justify-center">
                <svg class="w-[18px] h-[18px] fill-none stroke-white stroke-2 [stroke-linecap:round] [stroke-linejoin:round]"><use href="#i-bot"/></svg>
            </button>
        </main>
    </div>
</div>
</body>
</html>
